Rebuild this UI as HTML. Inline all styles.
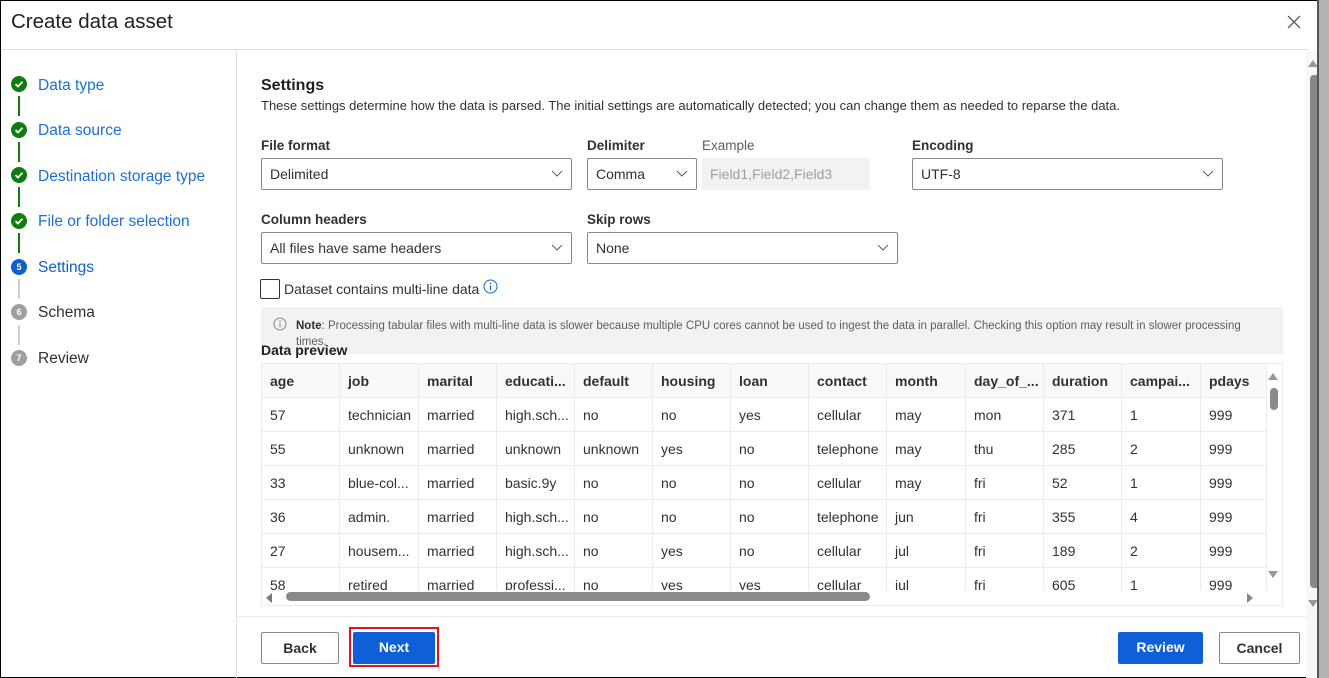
<!DOCTYPE html>
<html><head><meta charset="utf-8"><style>
*{box-sizing:border-box;margin:0;padding:0}
body{width:1329px;height:678px;overflow:hidden;background:#fff;font-family:"Liberation Sans",sans-serif;color:#323130;position:relative}
.a{position:absolute;white-space:nowrap}
.lbl{font-size:13.5px;font-weight:bold;color:#323130}
.dd{position:absolute;height:32px;border:1px solid #8a8886;border-radius:2px;font-size:14px;padding:7px 8px;color:#323130}
.dd svg{position:absolute;right:8px;top:11px}
.step{position:absolute;left:38px;font-size:15.5px;color:#1b6fd6}
.ic{position:absolute;left:11px;width:16px;height:16px;border-radius:50%}
.ln{position:absolute;left:18px;width:2px;height:20px}
.th,.td{position:absolute;font-size:14px;height:34px;line-height:34px;padding-left:8px;border-right:1px solid #edebe9;border-bottom:1px solid #edebe9;overflow:hidden}
.th{font-weight:bold;background:#faf9f8}
.btn{position:absolute;height:32px;font-size:14px;font-weight:bold;text-align:center;line-height:30px;border-radius:2px}
</style></head><body>
<div class="a" style="left:0;top:0;width:1318px;height:678px;border:1px solid #000;border-right:none"></div>
<div class="a" style="left:11px;top:10px;font-size:20.5px;color:#201f1e">Create data asset</div>
<svg class="a" style="left:1287px;top:15px" width="14" height="14"><path d="M1 1L13 13M13 1L1 13" stroke="#605e5c" stroke-width="1.3"/></svg>
<div class="a" style="left:1px;top:49px;width:1307px;height:1px;background:#e1dfdd"></div>
<div class="a" style="left:236px;top:50px;width:1px;height:628px;background:#e1dfdd"></div>
<!-- steps -->
<div class="ic" style="top:76px;background:#107c10"></div><div class="step" style="top:77px">Data type</div>
<div class="ln" style="top:96px;background:#107c10"></div>
<div class="ic" style="top:122px;background:#107c10"></div><div class="step" style="top:122px">Data source</div>
<div class="ln" style="top:142px;background:#107c10"></div>
<div class="ic" style="top:167px;background:#107c10"></div><div class="step" style="top:168px">Destination storage type</div>
<div class="ln" style="top:187px;background:#107c10"></div>
<div class="ic" style="top:213px;background:#107c10"></div><div class="step" style="top:213px">File or folder selection</div>
<div class="ln" style="top:233px;background:#107c10"></div>
<div class="ic" style="top:259px;background:#0f5fd0;color:#fff;font-size:9px;font-weight:bold;text-align:center;line-height:16px">5</div><div class="step" style="top:259px;color:#0f5fd0">Settings</div>
<div class="ln" style="top:279px;background:#d2d0ce"></div>
<div class="ic" style="top:304px;background:#a19f9d;color:#fff;font-size:9px;font-weight:bold;text-align:center;line-height:16px">6</div><div class="step" style="top:304px;color:#323130">Schema</div>
<div class="ln" style="top:325px;background:#d2d0ce"></div>
<div class="ic" style="top:350px;background:#a19f9d;color:#fff;font-size:9px;font-weight:bold;text-align:center;line-height:16px">7</div><div class="step" style="top:350px;color:#323130">Review</div>
<svg class="a" style="left:11px;top:76px" width="16" height="150"><g fill="none" stroke="#fff" stroke-width="1.8"><path d="M4.5 8.2L7 10.5L11.5 5.8"/><path d="M4.5 54.2L7 56.5L11.5 51.8"/><path d="M4.5 99.2L7 101.5L11.5 96.8"/><path d="M4.5 145.2L7 147.5L11.5 142.8"/></g></svg>
<!-- settings -->
<div class="a" style="left:261px;top:77px;font-size:16px;font-weight:bold;color:#201f1e">Settings</div>
<div class="a" style="left:261px;top:98px;font-size:13px">These settings determine how the data is parsed. The initial settings are automatically detected; you can change them as needed to reparse the data.</div>
<div class="a lbl" style="left:261px;top:138px">File format</div>
<div class="a lbl" style="left:587px;top:138px">Delimiter</div>
<div class="a" style="left:702px;top:138px;font-size:13.5px;color:#605e5c">Example</div>
<div class="a lbl" style="left:912px;top:138px">Encoding</div>
<div class="dd" style="left:261px;top:158px;width:311px">Delimited<svg width="12" height="8"><path d="M1 1L6 6L11 1" fill="none" stroke="#605e5c"/></svg></div>
<div class="dd" style="left:587px;top:158px;width:110px">Comma<svg width="12" height="8"><path d="M1 1L6 6L11 1" fill="none" stroke="#605e5c"/></svg></div>
<div class="dd" style="left:702px;top:158px;width:168px;border:none;background:#f3f2f1;color:#a19f9d;padding-top:8px">Field1,Field2,Field3</div>
<div class="dd" style="left:912px;top:158px;width:311px">UTF-8<svg width="12" height="8"><path d="M1 1L6 6L11 1" fill="none" stroke="#605e5c"/></svg></div>
<div class="a lbl" style="left:261px;top:212px">Column headers</div>
<div class="a lbl" style="left:587px;top:212px">Skip rows</div>
<div class="dd" style="left:261px;top:232px;width:311px">All files have same headers<svg width="12" height="8"><path d="M1 1L6 6L11 1" fill="none" stroke="#605e5c"/></svg></div>
<div class="dd" style="left:587px;top:232px;width:311px">None<svg width="12" height="8"><path d="M1 1L6 6L11 1" fill="none" stroke="#605e5c"/></svg></div>
<div class="a" style="left:260px;top:279px;width:20px;height:20px;border:1px solid #323130;border-radius:2px"></div>
<div class="a" style="left:284px;top:281px;font-size:14px">Dataset contains multi-line data</div>
<svg class="a" style="left:483px;top:279px" width="15" height="15"><circle cx="7.5" cy="7.5" r="6.5" fill="none" stroke="#0f6cbd"/><path d="M7.5 6.5V11" stroke="#0f6cbd" stroke-width="1.2"/><circle cx="7.5" cy="4.3" r=".8" fill="#0f6cbd"/></svg>
<div class="a" style="left:261px;top:307px;width:1022px;height:47px;background:#f3f2f1"></div>
<svg class="a" style="left:273px;top:317px" width="14" height="14"><circle cx="7" cy="7" r="6" fill="none" stroke="#8a8886"/><path d="M7 6V10.5" stroke="#8a8886"/><circle cx="7" cy="4" r=".7" fill="#8a8886"/></svg>
<div class="a" style="left:296px;top:318px;font-size:11.5px;color:#605e5c;white-space:normal;width:975px;line-height:16px"><b style="color:#323130">Note</b>: Processing tabular files with multi-line data is slower because multiple CPU cores cannot be used to ingest the data in parallel. Checking this option may result in slower processing times.</div>
<div class="a" style="left:261px;top:342px;font-size:14px;font-weight:bold;color:#201f1e">Data preview</div>
<!-- table -->
<div class="a" style="left:261px;top:363px;width:1022px;height:243px;border:1px solid #edebe9;overflow:hidden">
<div style="position:absolute;left:0;top:0;width:1005px;height:226px;overflow:hidden" id="t"></div>
<div style="position:absolute;left:0;top:226px;width:1022px;height:16px;background:#fff"></div>
<svg style="position:absolute;left:3px;top:229px" width="8" height="10"><path d="M7 0V10L1 5Z" fill="#777"/></svg>
<svg style="position:absolute;left:984px;top:229px" width="8" height="10"><path d="M1 0V10L7 5Z" fill="#888"/></svg>
<div style="position:absolute;left:24px;top:228px;width:584px;height:9px;border-radius:5px;background:#8a8a8a"></div>
<svg style="position:absolute;left:1006px;top:8px" width="10" height="8"><path d="M0 8H10L5 1Z" fill="#999"/></svg>
<div style="position:absolute;left:1008px;top:24px;width:8px;height:22px;border-radius:4px;background:#8a8a8a"></div>
<svg style="position:absolute;left:1006px;top:207px" width="10" height="8"><path d="M0 0H10L5 7Z" fill="#999"/></svg>
</div>
<div class="a" style="left:237px;top:616px;width:1071px;height:1px;background:#edebe9"></div>
<!-- buttons -->
<div class="btn" style="left:261px;top:632px;width:78px;border:1px solid #8a8886;color:#323130">Back</div>
<div class="a" style="left:349px;top:627px;width:90px;height:40px;border:2px solid #e81123"></div>
<div class="btn" style="left:353px;top:632px;width:82px;background:#0f5fd8;color:#fff">Next</div>
<div class="btn" style="left:1118px;top:632px;width:85px;background:#0f5fd8;color:#fff">Review</div>
<div class="btn" style="left:1219px;top:632px;width:81px;border:1px solid #8a8886;color:#323130">Cancel</div>
<!-- page scrollbar & frame -->
<div class="a" style="left:1306px;top:50px;width:12px;height:628px;background:#f8f8f8"></div>
<svg class="a" style="left:1308px;top:59px" width="10" height="8"><path d="M0 8H10L5 1Z" fill="#999"/></svg>
<div class="a" style="left:1310px;top:75px;width:8px;height:513px;border-radius:4px 0 0 4px;background:#888"></div>
<svg class="a" style="left:1308px;top:600px" width="10" height="8"><path d="M0 0H10L5 7Z" fill="#999"/></svg>
<div class="a" style="left:1317px;top:0;width:2px;height:678px;background:#555"></div>
<div class="a" style="left:1319px;top:0;width:10px;height:678px;background:#b4b4b4"></div>
<script>
var xs=[0,78,157,235,313,391,469,547,625,704,782,860,939,1005];
var H=["age","job","marital","educati...","default","housing","loan","contact","month","day_of_...","duration","campai...","pdays"];
var R=[["57","technician","married","high.sch...","no","no","yes","cellular","may","mon","371","1","999"],
["55","unknown","married","unknown","unknown","yes","no","telephone","may","thu","285","2","999"],
["33","blue-col...","married","basic.9y","no","no","no","cellular","may","fri","52","1","999"],
["36","admin.","married","high.sch...","no","no","no","telephone","jun","fri","355","4","999"],
["27","housem...","married","high.sch...","no","yes","no","cellular","jul","fri","189","2","999"],
["58","retired","married","professi...","no","yes","yes","cellular","jul","fri","605","1","999"]];
var h="";
for(var c=0;c<13;c++){h+='<div class="th" style="left:'+xs[c]+'px;top:0;width:'+(xs[c+1]-xs[c])+'px">'+H[c]+'</div>';
for(var r=0;r<6;r++)h+='<div class="td" style="left:'+xs[c]+'px;top:'+(34+r*34)+'px;width:'+(xs[c+1]-xs[c])+'px">'+R[r][c]+'</div>';}
document.getElementById("t").innerHTML=h;
</script>
</body></html>
